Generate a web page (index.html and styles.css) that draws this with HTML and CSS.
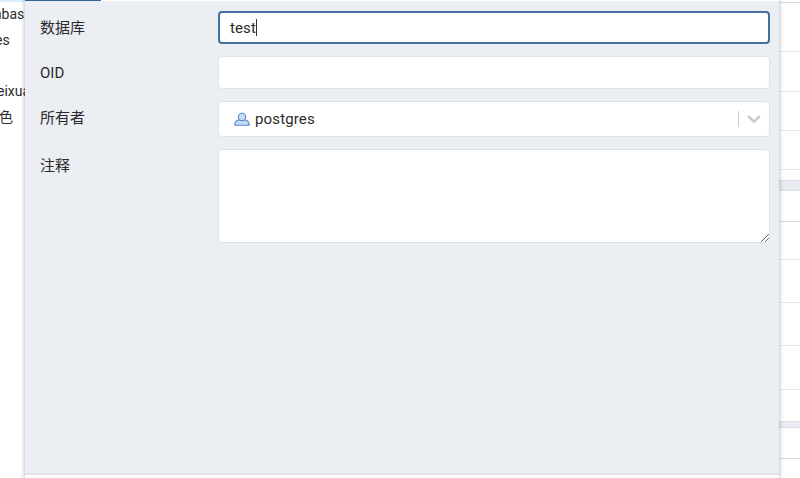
FILE: index.html
```html
<!DOCTYPE html>
<html lang="zh-CN">
<head>
<meta charset="utf-8">
<title>数据库</title>
<link rel="stylesheet" href="styles.css">
</head>
<body>
<div class="app">
  <aside class="tree">
    <div class="node n-db"><span>abas</span></div>
    <div class="node n-es"><span>es</span></div>
    <div class="node"></div>
    <div class="node n-user"><span>eixua</span></div>
    <div class="node n-role"><span>色</span></div>
  </aside>
  <main class="dialog">
    <div class="tabs"><div class="tab"></div></div>
    <form class="form">
      <div class="row r-name"><label>数据库</label><div class="field focused"><span>test</span><i class="caret"></i></div></div>
      <div class="row r-oid"><label>OID</label><div class="field"></div></div>
      <div class="row r-owner"><label>所有者</label>
        <div class="field select">
          <svg class="user" width="16" height="14" viewBox="0 0 16 14"><path d="M.8 13.2V12.2Q1.2 8.6 5 8H11Q14.8 8.6 15.2 12.2V13.2Z"/><circle cx="8" cy="4.9" r="3.7"/></svg>
          <span class="value">postgres</span>
          <i class="divider"></i>
          <svg class="chevron" width="14" height="9" viewBox="0 0 14 9"><path d="M1.8 1.7L7 6.6L12.2 1.7"/></svg>
        </div>
      </div>
      <div class="row r-note"><label>注释</label>
        <div class="field area"><svg width="9" height="9" viewBox="0 0 9 9"><path d="M1.2 8.7L8.7 1.2M5.2 8.7L8.7 5.2"/></svg></div>
      </div>
    </form>
    <footer class="footer"></footer>
  </main>
  <aside class="grid">
    <div class="line h3 blue"></div>
    <div class="line h49"></div>
    <div class="line h40"></div>
    <div class="line h39"></div>
    <div class="line h39"></div>
    <div class="gap"></div>
    <div class="gutter"></div>
    <div class="line h31 dark"></div>
    <div class="line h38"></div>
    <div class="line h43"></div>
    <div class="line h43"></div>
    <div class="line h44"></div>
    <div class="space"></div>
    <div class="gutter small"></div>
    <div class="line h31 dark"></div>
  </aside>
</div>
</body>
</html>
```

FILE: styles.css
```css
* { box-sizing: border-box; }
body {
  margin: 0;
  background: #fff;
  color: #2b2b2b;
  font-family: Roboto, "Noto Sans CJK SC", sans-serif;
  font-size: 15px;
}
.app { display: flex; width: 800px; height: 478px; overflow: hidden; }
.tree {
  width: 25px;
  flex: none;
  overflow: hidden;
  padding-top: 1px;
  background: linear-gradient(#d9edfb 0 2px, #fff 2px);
}
.node { height: 25.8px; line-height: 26px; font-size: 14px; white-space: nowrap; }
.n-db { margin-left: -6px; }
.n-es { margin-left: -5px; }
.n-user { margin-left: -3px; }
.n-role { margin-left: -1px; }
.dialog {
  position: relative;
  width: 754px;
  flex: none;
  display: flex;
  flex-direction: column;
  background: #ebeef3;
  box-shadow: 0 0 4px 1px rgba(0, 0, 0, .22);
}
.tabs { height: 1px; background: #fff; }
.tab { width: 76px; height: 1px; background: #326690; }
.form { flex: 1; padding: 10px 9px 0 15px; }
.row { display: flex; height: 33px; margin-bottom: 12px; }
.row label { width: 178px; flex: none; line-height: 35px; }
.field {
  flex: 1;
  display: flex;
  align-items: center;
  background: #fff;
  border: 1px solid #dfe2e6;
  border-radius: 4px;
  padding-left: 12px;
}
.focused { border: 2px solid #44709b; padding-left: 10px; letter-spacing: .1px; }
.caret { width: 1px; height: 17px; background: #333; }
.r-owner { height: 36px; }
.select { padding: 0 8px 0 15px; }
.user { fill: #c3def4; stroke: #5d86c9; stroke-width: 1.1; }
.value { flex: 1; margin-left: 5px; letter-spacing: .14px; }
.divider { width: 1px; height: 16px; background: #ccc; margin-right: 8px; }
.chevron { fill: none; stroke: #c8c8c8; stroke-width: 2.3; stroke-linecap: round; stroke-linejoin: round; }
.r-note { height: 94px; }
.area { align-items: flex-end; justify-content: flex-end; }
.area svg { fill: none; stroke: #555; stroke-width: 1; }
.tabs, .footer { flex: none; }
.footer { height: 5px; border-top: 2px solid #e0e3e8; background: #fff; }
.grid { flex: 1; background: #fff; }
.line { border-bottom: 1px solid #e6e8ec; }
.blue { border-color: #d5daea; }
.dark { border-color: #d9dde3; }
.h3 { height: 3px; }
.h49 { height: 49px; }
.h40 { height: 40px; }
.h39 { height: 39px; }
.h31 { height: 31px; }
.h38 { height: 38px; }
.h43 { height: 43px; }
.h44 { height: 44px; }
.gap { height: 10px; }
.gutter { height: 11px; background: #e8ebf0; border: 1px solid #dce0e5; border-width: 1px 0; }
.space { height: 31px; }
.small { height: 7px; }
```
